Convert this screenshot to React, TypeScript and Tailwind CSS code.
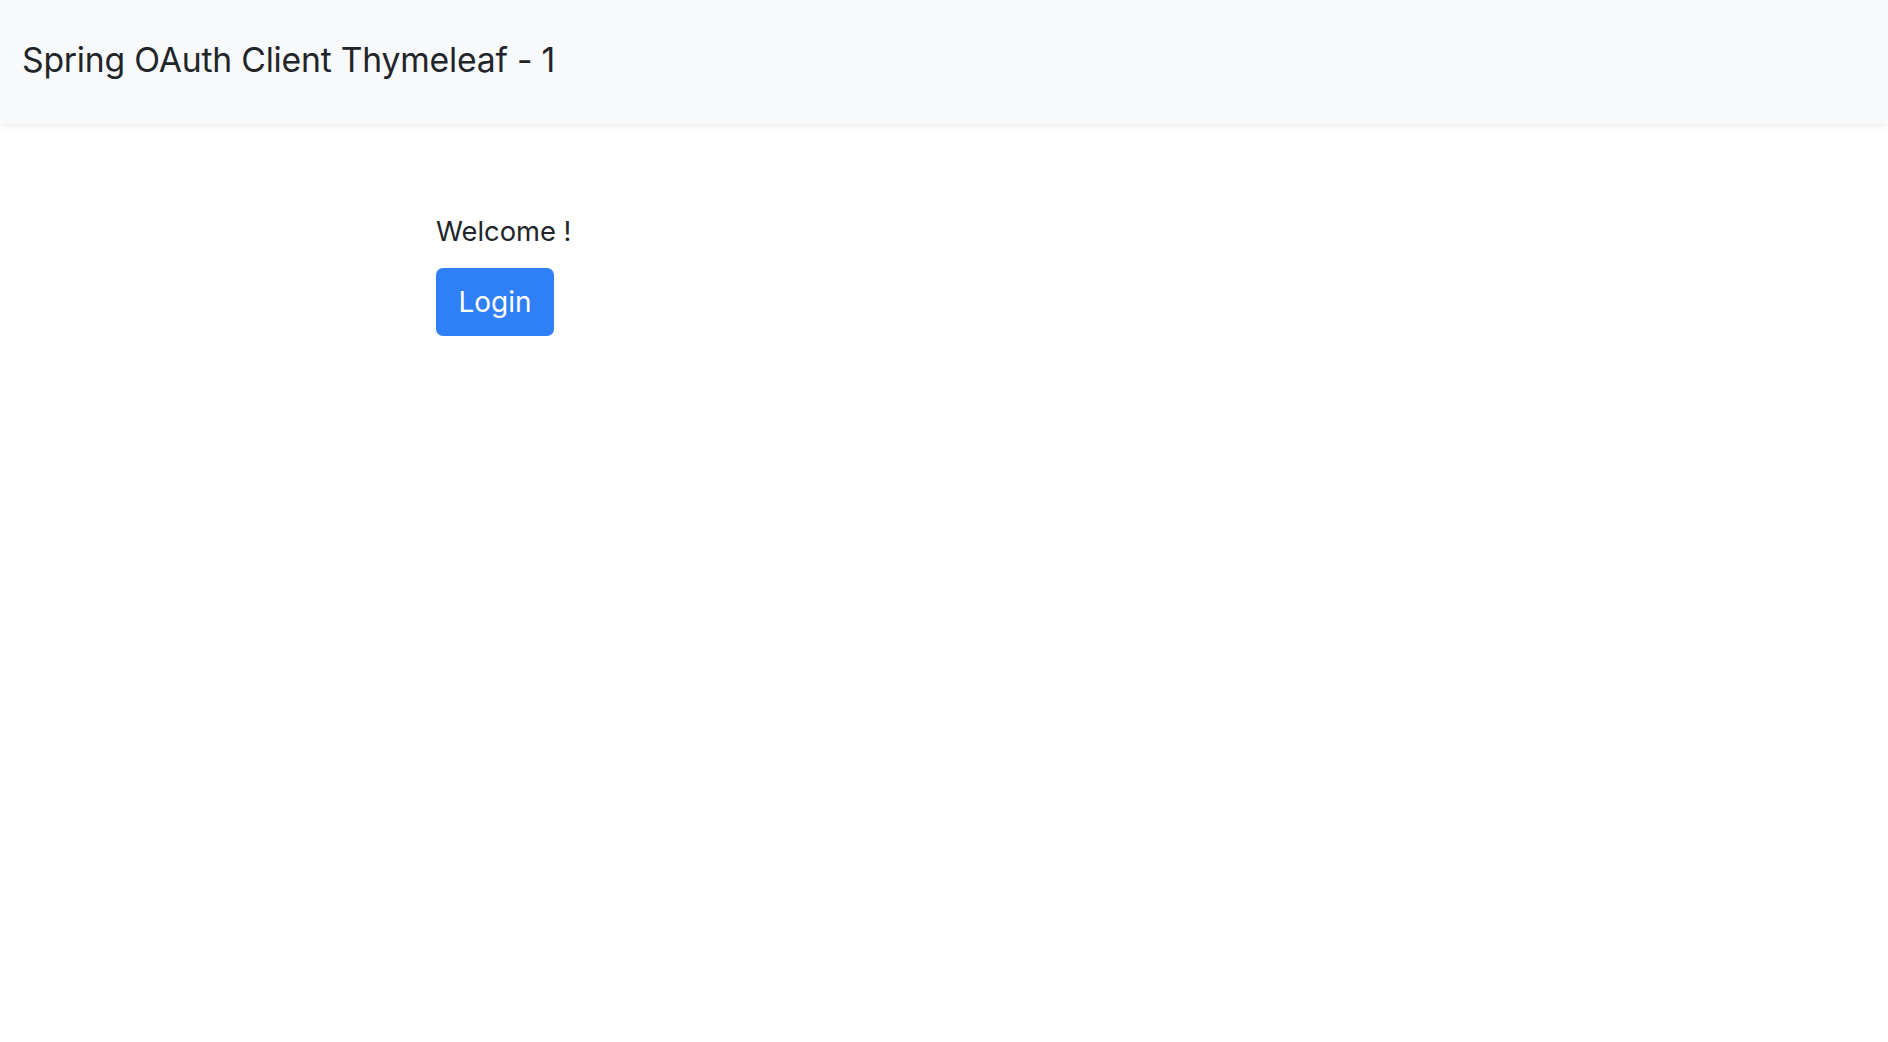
export default function App() {
  return (
    <div className="min-h-screen bg-white text-[#212529] font-['Inter','Liberation_Sans',sans-serif]">
      {/* Navbar */}
      <nav className="h-[124px] bg-[#f8f9fa] shadow-[0_2px_6px_rgba(0,0,0,0.08)] flex items-center px-[22px] pb-[4px]">
        <span className="text-[33.7px] tracking-[-0.2px]">Spring OAuth Client Thymeleaf - 1</span>
      </nav>

      {/* Content */}
      <div className="w-[1016px] mx-auto pt-[88px]">
        <p className="text-[27.3px] leading-[40px]">Welcome !</p>
        <button className="mt-[16px] h-[68px] w-[118px] rounded-[7px] bg-[#2f7ff6] text-white text-[28px]">
          Login
        </button>
      </div>
    </div>
  );
}
